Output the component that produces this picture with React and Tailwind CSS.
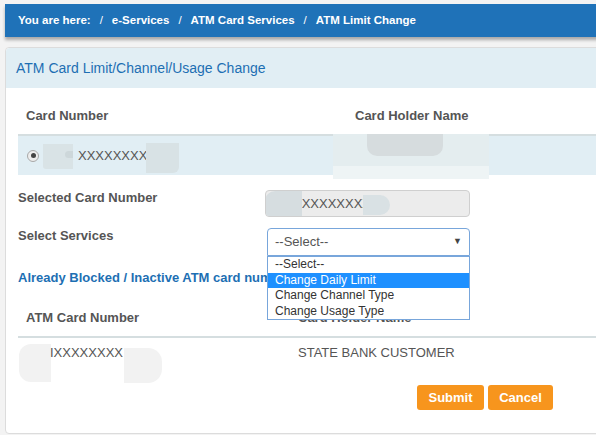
const crumbs = ["e-Services", "ATM Card Services", "ATM Limit Change"];

const options = [
  "--Select--",
  "Change Daily Limit",
  "Change Channel Type",
  "Change Usage Type",
];

function App() {
  return (
    <div className="w-[596px] h-[435px] overflow-hidden bg-[#f3f3f3] pt-[4px] pl-[5px] font-['Liberation_Sans',Arial,sans-serif]">
      {/* breadcrumb */}
      <div className="w-[600px] h-[33px] bg-[#1f72b8] flex items-center gap-[9px] pl-[13px] text-white text-[11.5px] font-bold shadow-[0_3px_3px_rgba(0,0,0,0.3)]">
        <span>You are here:</span>
        {crumbs.map((c) => (
          <span key={c} className="flex items-center gap-[9px]">
            <span className="font-normal">/</span>
            <span>{c}</span>
          </span>
        ))}
      </div>

      {/* panel */}
      <div className="mt-[10px] w-[620px] h-[387px] border border-[#dcdcdc] rounded-[4px] bg-white">
        <div className="h-[40px] bg-[#e1eef4] rounded-t-[4px] pl-[10px] flex items-center text-[14px] text-[#1d6fb3]">
          ATM Card Limit/Channel/Usage Change
        </div>

        <div className="pl-[12px] pt-[10px]">
          {/* first table */}
          <div className="h-[36px] flex items-center text-[13px] font-bold text-[#555]">
            <span className="w-[337px] pl-[8px]">Card Number</span>
            <span>Card Holder Name</span>
          </div>
          <div className="relative h-[41px] border-t-2 border-[#d5dee0] bg-[#e1eef4] flex items-center text-[13px] text-[#555]">
            <span className="ml-[9px] w-[12px] h-[12px] rounded-full border border-[#a8a8a8] bg-[#ededed] flex items-center justify-center">
              <span className="w-[5px] h-[5px] rounded-full bg-[#444]" />
            </span>
            <span className="ml-[39px]">XXXXXXXX</span>
            <span className="absolute left-[25px] top-[8px] w-[30px] h-[25px] bg-[#d9e3e6] rounded-bl-[3px]" />
            <span className="absolute left-[47px] top-[15px] w-[8px] h-[7px] bg-[#cdd7da] rounded-l-full" />
            <span className="absolute left-[128px] top-[7px] w-[33px] h-[30px] bg-[#d8e2e5] rounded-br-[6px]" />
            <span className="absolute left-[315px] top-[-2px] w-[156px] h-[45px] bg-[#e4edef] rounded-b-[4px]" />
            <span className="absolute left-[349px] top-[-2px] w-[76px] h-[22px] bg-[#d6dcde] rounded-b-[10px]" />
            <span className="absolute left-[315px] top-[30px] w-[156px] h-[13px] bg-[#eef4f5]" />
          </div>

          {/* form */}
          <div className="mt-[15px] flex items-start">
            <span className="w-[247px] leading-[16px] text-[13px] font-bold text-[#555]">
              Selected Card Number
            </span>
            <div className="relative w-[205px] h-[27px] rounded-[4px] border border-[#cfcfcf] bg-[#ececec] flex items-center text-[13px] text-[#555] overflow-hidden">
              <span className="ml-[27px]">XXXXXXXXXX</span>
              <span className="absolute left-[-1px] top-0 w-[37px] h-full bg-[#d6dde0] rounded-tl-[10px]" />
              <span className="absolute left-[97px] top-[4px] w-[27px] h-[20px] bg-[#d9e1e4] rounded-r-[10px]" />
            </div>
          </div>

          <div className="mt-[11px] flex items-start">
            <span className="w-[249px] leading-[16px] text-[13px] font-bold text-[#555]">
              Select Services
            </span>
            <div className="relative z-10">
              <div className="w-[203px] h-[28px] rounded-t-[4px] border border-[#78a6db] bg-white flex items-center justify-between pl-[7px] pr-[7px] text-[13px] text-[#555]">
                <span>--Select--</span>
                <span className="text-[9px] text-[#444]">▼</span>
              </div>
              <div className="absolute left-0 top-[28px] w-[203px] border border-[#78a6db] bg-white text-[12px] text-[#333]">
                {options.map((o, i) => (
                  <div
                    key={o}
                    className={
                      i === 1
                        ? "h-[15.5px] leading-[15.5px] pl-[7px] bg-[#1e90ff] text-white"
                        : "h-[15.5px] leading-[15.5px] pl-[7px]"
                    }
                  >
                    {o}
                  </div>
                ))}
              </div>
            </div>
          </div>

          <div className="mt-[14px] leading-[16px] text-[13px] font-bold text-[#1d6fb3] whitespace-nowrap">
            Already Blocked / Inactive ATM card number(s)
          </div>

          {/* second table */}
          <div className="mt-[14px] h-[36px] flex items-center text-[13px] font-bold text-[#555]">
            <span className="w-[280px] pl-[8px]">ATM Card Number</span>
            <span>Card Holder Name</span>
          </div>
          <div className="relative h-[32px] border-t-2 border-[#d5dee0] flex items-center text-[13px] text-[#555]">
            <span className="absolute left-[1px] top-[6px] w-[32px] h-[38px] bg-[#f2f2f2] rounded-l-[12px]" />
            <span className="absolute left-[106px] top-[10px] w-[38px] h-[35px] bg-[#f2f2f2] rounded-r-[14px]" />
            <span className="relative w-[280px] pl-[32px]">IXXXXXXXX</span>
            <span>STATE BANK CUSTOMER</span>
          </div>

          <div className="mt-[17px] pl-[399px] flex gap-[4px]">
            <button className="w-[67px] h-[25px] rounded-[3px] bg-[#f7951d] text-white text-[13px] font-bold">
              Submit
            </button>
            <button className="w-[65px] h-[25px] rounded-[3px] bg-[#f7951d] text-white text-[13px] font-bold">
              Cancel
            </button>
          </div>
        </div>
      </div>
    </div>
  );
}

export default App;
